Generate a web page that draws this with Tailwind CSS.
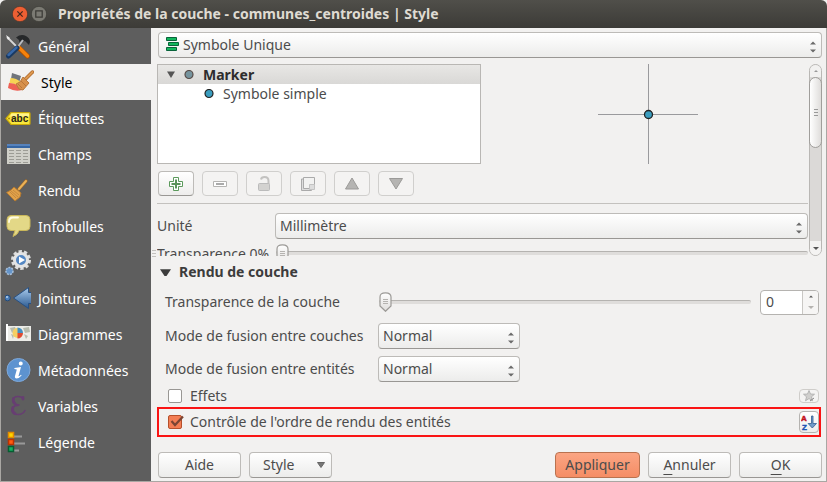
<!DOCTYPE html>
<html lang="fr">
<head>
<meta charset="utf-8">
<title>Propriétés de la couche</title>
<script src="https://cdn.jsdelivr.net/npm/@tailwindcss/browser@4"></script>
</head>
<body class="bg-[#f2f1f0] font-['Noto_Sans','Open_Sans',sans-serif] text-sm leading-5 text-[#4c4c4c]">
<svg class="absolute size-0" aria-hidden="true">
  <symbol id="updown" viewBox="0 0 6 12"><path d="M0 3.500 3 .5l3 3zM0 8.500h6l-3 3z" fill="#6a6a6a"/></symbol>
  <symbol id="knob" viewBox="0 0 13 20">
    <path d="M1 5Q1 .8 6.500.8T12 5v9l-5.500 5.300L1 14z" fill="url(#knobfill)" stroke="#9c9a97" stroke-width="1.200"/>
    <path d="M4 7.500h5M4 9.500h5M4 11.500h5" stroke="#b5b3b0" stroke-width="1"/>
  </symbol>
  <linearGradient id="knobfill" x2="0" y2="1"><stop stop-color="#fff"/><stop offset="1" stop-color="#dedcda"/></linearGradient>
</svg>
<div class="flex min-h-screen flex-col">
  <header class="flex h-7 shrink-0 items-center rounded-t-md bg-linear-to-b from-[#504f4a] to-[#3c3b37] pl-3">
    <button aria-label="Fermer" class="mr-[3px] size-4"><svg viewBox="0 0 15 15"><circle cx="7.500" cy="7.500" r="7.200" fill="#ee5f33" stroke="#33322e" stroke-width=".6"/><path d="m5 5 5 5m0-5-5 5" stroke="#45281d" stroke-width="1.200"/></svg></button>
    <button aria-label="Agrandir" class="mr-[11px] size-4"><svg viewBox="0 0 15 15"><circle cx="7.500" cy="7.500" r="7.200" fill="#7b7a73" stroke="#33322e" stroke-width=".6"/><path d="M4.500 4.500h6v6h-6z" fill="none" stroke="#3c3b37" stroke-width="1.200"/></svg></button>
    <h1 class="font-bold text-[#dfdbd2]">Propriétés de la couche - communes_centroides | Style</h1>
  </header>
  <div class="flex flex-1 border-x border-b border-[#a9a7a3]">
    <nav class="w-[150px] shrink-0 bg-[#5e5e5e] text-white">
      <a href="#" class="flex h-9 items-center gap-[7px] pt-[2px] pl-1">
        <svg class="size-[26px]" viewBox="0 0 26 26"><path d="m2 3 11 11" stroke="#d8d8d8" stroke-width="1.800"/><path d="m1 1 4 3-2 2z" fill="#eee"/><path d="M11 3.500Q16-.5 21 2q4 2 4 6l-1 3-4-4-3 1-2 3-1-5z" fill="#26282a"/><path d="m13 10 4-4 2 2-4 4z" fill="#555"/><path d="m13.500 13.500 9 8.500" stroke="#a94e00" stroke-width="5" stroke-linecap="round"/><path d="m14 13.500 8.500 8.500" stroke="#f5820c" stroke-width="3.500" stroke-linecap="round"/><path d="m18 6-6 8" stroke="#b9bcc0" stroke-width="2"/><path d="m12 14-8.500 8" stroke="#183963" stroke-width="5" stroke-linecap="round"/><path d="m11.500 13.500-8 7.500" stroke="#3868a8" stroke-width="2.500" stroke-linecap="round"/></svg>Général</a>
      <a href="#" aria-current="page" class="flex h-9 items-center gap-[7px] bg-[#f2f1f0] pt-[2px] pl-[7px] text-black">
        <svg class="size-[26px]" viewBox="0 0 26 26"><path d="m4 3 9 3-2 7-8-4z" fill="#70747b"/><path d="M2.500 8q6 0 10 4l-2 5q-4-4-9-4z" fill="#f6d254"/><path d="M1 13q6 0 9 3l4 4q-7 2-14-2z" fill="#ee6055"/><path d="m24.500 2-7 7" stroke="#a96023" stroke-width="3.500" stroke-linecap="round"/><path d="m24.500 2-7 7" stroke="#dc9850" stroke-width="2.200" stroke-linecap="round"/><path d="m15 7 6 6-6 7-4-1-3-5 4-2z" fill="#d7914c" stroke="#b9783b"/><path d="m10 14 4 4m-1-7 5 5" stroke="#a8652c" stroke-width=".6"/></svg>Style</a>
      <a href="#" class="flex h-9 items-center gap-[7px] pt-[2px] pl-1">
        <svg class="size-[26px]" viewBox="0 0 26 26"><path d="M6 6.500h18q1 0 1 1v10q0 1-1 1H6L1 12.500z" fill="#f8e63c" stroke="#cbaa07" stroke-width="1.200"/><path d="M6.500 7.500H24v3H5z" fill="#fff38b"/><circle cx="4" cy="12.500" r="1" fill="#ab8d00"/><text x="6" y="16" font-size="10" font-weight="bold" font-family="Liberation Sans" fill="#27251c">abc</text></svg>Étiquettes</a>
      <a href="#" class="flex h-9 items-center gap-[7px] pt-[2px] pl-1">
        <svg class="size-[26px]" viewBox="0 0 26 26"><path d="M2 2h23v20H2z" fill="#cfcfc8"/><path d="M2 2h23v4H2z" fill="#3465a4"/><path d="M2 3h23" stroke="#7ba1d2"/><path d="M4 8.500h5m2 0h5m2 0h5M4 11.500h5m2 0h5m2 0h5M4 14.500h5m2 0h5m2 0h5M4 17.500h5m2 0h5m2 0h5M4 20.500h5m2 0h5m2 0h5" stroke="#9c9c95"/></svg>Champs</a>
      <a href="#" class="flex h-9 items-center gap-[7px] pt-[2px] pl-1">
        <svg class="size-[26px]" viewBox="0 0 26 26"><path d="m21 3-7 8" stroke="#a96b20" stroke-width="3.200" stroke-linecap="round"/><path d="m21 3-7 8" stroke="#e9b259" stroke-width="2" stroke-linecap="round"/><path d="m9 9 7 6-1 4-5 4-8.500-8.500L6 12z" fill="#e1a24a" stroke="#b47a31"/><path d="m5 14 6 6m-3-8 6 5m-8-4 7 6" stroke="#b9803a" stroke-width=".7"/></svg>Rendu</a>
      <a href="#" class="flex h-9 items-center gap-[7px] pt-[2px] pl-1">
        <svg class="size-[26px]" viewBox="0 0 26 26"><path d="M6 1.500h15q4 0 4 4v7q0 4-4 4h-7q-1 4-6 6l2-6H6q-4 0-4-4v-7q0-4 4-4z" fill="#e3d887" stroke="#c9b75a"/><path d="M4 8q0-4.500 4-4.500h5" fill="none" stroke="#fffce3" stroke-width="1.800" stroke-linecap="round"/></svg>Infobulles</a>
      <a href="#" class="flex h-9 items-center gap-[7px] pt-[2px] pl-1">
        <svg class="size-[26px]" viewBox="0 0 26 26"><circle cx="16" cy="10" r="8.500" fill="none" stroke="#dedede" stroke-width="3" stroke-dasharray="3.300 2.040"/><circle cx="16" cy="10" r="6.500" fill="#5487c3" stroke="#e4e4e4" stroke-width="3"/><path d="m14 6.500 6 3.500-6 3.500z" fill="#fff"/><circle cx="4.500" cy="21" r="3.500" fill="#6595ca" stroke="#a9bfd8" stroke-width="1.600" stroke-dasharray="2 1"/></svg>Actions</a>
      <a href="#" class="flex h-9 items-center gap-[7px] pt-[2px] pl-1">
        <svg class="size-[26px]" viewBox="0 0 26 26"><defs><linearGradient id="cone" x2="0" y2="1"><stop stop-color="#a9cbed"/><stop offset="1" stop-color="#29588f"/></linearGradient></defs><path d="m8.500 12 15-10.500v5h3v11h-3v5z" fill="url(#cone)" stroke="#275083"/><circle cx="2.500" cy="12" r="2.800" fill="#4c7fba" stroke="#224a7a"/><circle cx="2" cy="11" r="1" fill="#b9d5ef"/></svg>Jointures</a>
      <a href="#" class="flex h-9 items-center gap-[7px] pt-[2px] pl-1">
        <svg class="size-[26px]" viewBox="0 0 26 26"><path d="M2 4h24v15H2z" fill="#ecece8"/><path d="M2 2v17" stroke="#fff" stroke-width="2"/><path d="m5 6 5-1 1 3-4 3zm13 0 6-1 1 5-5 1zm-12 6 3 1-1 4zm13 0 4 2-2 3z" fill="#b7bcae"/><circle cx="12.500" cy="11" r="5" fill="#f5cf64"/><path d="M12.500 5.500a5.500 5.500 0 0 1 5.500 5.500h-5.500z" fill="#448fc2"/><path d="M12.500 11H18a5.500 5.500 0 0 1-5.500 5.500z" fill="#df4b32"/></svg>Diagrammes</a>
      <a href="#" class="flex h-9 items-center gap-[7px] pt-[2px] pl-1">
        <svg class="size-[26px]" viewBox="0 0 26 26"><circle cx="13.500" cy="12" r="11.500" fill="#5d93d0" stroke="#7fa9da"/><path d="M15.800 3.500a2 2 0 1 1-.1 4 2 2 0 0 1 .1-4zM9.500 10q3.500-.3 6.500-1l-2.500 9q0 1 2.500-1.200l.6.8q-2.600 3-5 3-2.200-.2-1.600-2.600l1.800-6.500-2.500-.5z" fill="#fff"/></svg>Métadonnées</a>
      <a href="#" class="flex h-9 items-center gap-[7px] pt-[2px] pl-1">
        <svg class="size-[26px]" viewBox="0 0 26 26" fill="none" stroke="#673e72" stroke-linecap="round"><path d="M18 4.500Q16.500 2.500 13 2.500q-5 0-5 4t6 4.500M13 11.500q-6 0-6 4.500t6 4.500q5 0 7-4" stroke-width="1.600"/><path d="M8.500 4.500q-1 3 1.500 5M8 13.500q-1.500 4 2 6M18 3.500v1.500" stroke-width="2.800"/></svg>Variables</a>
      <a href="#" class="flex h-9 items-center gap-[7px] pt-[2px] pl-1">
        <svg class="size-[26px]" viewBox="0 0 26 26"><path d="M9 6.500h8m-8 7h11m-11 7h5" stroke="#999" stroke-width="2"/><path d="M3.500 2.500h5v5h-5z" fill="#ffd500" stroke="#e38b00" stroke-width="1.500"/><path d="M3.500 9.500h5v5h-5z" fill="#ff5b10" stroke="#bd3200" stroke-width="1.500"/><path d="M3.500 16.500h5v5h-5z" fill="#16b160" stroke="#075c32" stroke-width="1.500"/></svg>Légende</a>
    </nav>
    <main class="flex min-w-0 flex-1 flex-col pt-1 pr-1 pb-[3px] pl-[6px]">
      <div class="relative ml-px">
        <select aria-label="Type de symbole" class="block h-[26px] w-full appearance-none rounded-[4px] border border-[#bdbbb8] border-b-[#999794] bg-linear-to-b from-white to-[#ececeb] pl-6"><option>Symbole Unique</option></select>
        <svg class="pointer-events-none absolute top-[5px] left-[7px] h-[15px] w-[14px]" viewBox="0 0 14 15" fill="#12b65c" stroke="#08633a"><path d="M1.500.5h10v3h-10zM3.500 5.500h10v3h-10zM1.500 10.500h10v3h-10z"/></svg>
        <svg class="pointer-events-none absolute top-[9px] right-[6px] h-3 w-[6px]"><use href="#updown"/></svg>
      </div>
      <section class="mt-[6px] flex h-48 overflow-hidden">
        <div class="min-w-0 flex-1">
          <div class="flex">
            <ul role="tree" class="h-[100px] w-[324px] border border-[#b9b7b4] bg-white">
              <li role="treeitem" class="flex h-[19px] items-center bg-linear-to-b from-[#e8e7e5] to-[#d9d8d6] pl-2 font-bold text-[#2d2d2d]">
                <svg class="mr-2 size-[10px]" viewBox="0 0 10 10"><path d="M1 1.500h8L5 8z" fill="#555"/></svg>
                <svg class="mr-[9px] size-[10px]" viewBox="0 0 10 10"><circle cx="5" cy="4.500" r="4" fill="#76949e" stroke="#584c48" stroke-width="1.200"/></svg>Marker</li>
              <li role="treeitem" class="flex h-[19px] items-center gap-[9px] pl-[46px]">
                <svg class="size-[10px]" viewBox="0 0 10 10"><circle cx="5" cy="4.500" r="4" fill="#3a9dbf" stroke="#222" stroke-width="1.200"/></svg>Symbole simple</li>
            </ul>
            <div class="flex flex-1 justify-center pl-[6px]">
              <svg class="size-[100px]" viewBox="0 0 100 100"><path d="M50.500 0v100M0 50.500h100" stroke="#9a9a9d"/><circle cx="50.500" cy="50.500" r="4" fill="#3a9dbf" stroke="#222" stroke-width="1.300"/></svg>
            </div>
          </div>
          <div class="mt-[7px] ml-px flex gap-2">
            <button aria-label="Ajouter" class="flex h-[25px] w-9 items-center justify-center rounded-[4px] border border-[#bdbbb8] border-b-[#999794] bg-linear-to-b from-white to-[#eeedec]"><svg class="size-4" viewBox="0 0 16 16"><path d="M5.500 1.500h5v4h4v5h-4v4h-5v-4h-4v-5h4z" fill="#fff" stroke="#5c9a5c"/><path d="M8 3.500v9M3.500 8h9" stroke="#5a925a" stroke-width="2"/></svg></button>
            <button disabled aria-label="Supprimer" class="flex h-[25px] w-9 items-center justify-center rounded-[4px] border border-[#d0cfcd] bg-[#f4f3f2]"><svg class="size-4" viewBox="0 0 16 16"><path d="M1.500 5.500h13v5h-13z" fill="#fff" stroke="#b5b4b2"/><path d="M4 8h8" stroke="#aaa" stroke-width="2"/></svg></button>
            <button disabled aria-label="Verrouiller" class="flex h-[25px] w-9 items-center justify-center rounded-[4px] border border-[#d0cfcd] bg-[#f4f3f2]"><svg class="size-4" viewBox="0 0 16 16"><path d="M5 3.500Q5.500 1 8.500 1q4 0 4 4v3" fill="none" stroke="#c3c2c0" stroke-width="2"/><rect x="2.500" y="7.500" width="11" height="7" rx="1" fill="#d3d2d0" stroke="#bbb"/></svg></button>
            <button disabled aria-label="Dupliquer" class="flex h-[25px] w-9 items-center justify-center rounded-[4px] border border-[#d0cfcd] bg-[#f4f3f2]"><svg class="size-4" viewBox="0 0 16 16"><path d="M3.500 3h-2v11.500h10V14" fill="#ddd" stroke="#aaa"/><path d="M3.500 1.500h11v11h-11z" fill="#f2f2f1" stroke="#aaa"/><path d="M9.500 8.500h5v5h-5z" fill="#ddd" stroke="#c3c3c3"/></svg></button>
            <button disabled aria-label="Monter" class="flex h-[25px] w-9 items-center justify-center rounded-[4px] border border-[#d0cfcd] bg-[#f4f3f2]"><svg class="size-4" viewBox="0 0 16 16"><path d="m8 2 6.500 11h-13z" fill="#b5b4b2" stroke="#9b9a98"/></svg></button>
            <button disabled aria-label="Descendre" class="flex h-[25px] w-9 items-center justify-center rounded-[4px] border border-[#d0cfcd] bg-[#f4f3f2]"><svg class="size-4" viewBox="0 0 16 16"><path d="M1.500 2.500h13L8 13z" fill="#b5b4b2" stroke="#9b9a98"/></svg></button>
          </div>
          <hr class="mt-[7px] border-[#c3c1be]">
          <div class="mt-[9px] flex items-center">
            <label for="unit" class="w-[118px]">Unité</label>
            <div class="relative flex-1">
              <select id="unit" class="block h-[26px] w-full appearance-none rounded-[4px] border border-[#bdbbb8] border-b-[#999794] bg-linear-to-b from-white to-[#ececeb] pl-1"><option>Millimètre</option></select>
              <svg class="pointer-events-none absolute top-[9px] right-[6px] h-3 w-[6px]"><use href="#updown"/></svg>
            </div>
          </div>
          <div class="mt-[5px] flex items-start">
            <label for="alpha" class="w-[119px] whitespace-nowrap">Transparence 0%</label>
            <div class="relative h-5 flex-1">
              <input id="alpha" type="range" value="0" class="mt-[7px] block h-1 w-full appearance-none rounded-sm border-t border-[#b5b3b0] bg-[#dfdddb] [&::-webkit-slider-thumb]:opacity-0">
              <svg class="pointer-events-none absolute top-0 left-0 h-5 w-[13px]"><use href="#knob"/></svg>
            </div>
          </div>
        </div>
        <div role="scrollbar" aria-label="Défilement" aria-controls="unit" aria-valuenow="0" class="ml-px flex w-[13px] flex-col items-center rounded-full border border-[#b9b7b4] bg-[#dbd9d7]">
          <span class="flex h-3 w-full shrink-0 items-center justify-center rounded-t-full bg-[#f2f1f0]"><svg class="h-[2px] w-1" viewBox="0 0 4 2"><path d="m0 2 2-2 2 2z" fill="#999"/></svg></span>
          <span class="flex h-[71px] w-[13px] shrink-0 flex-col items-center justify-center gap-[2px] rounded-full border border-[#a09e9b] bg-linear-to-r from-white to-[#dfdddb]"><i class="h-px w-1 bg-[#999]"></i><i class="h-px w-1 bg-[#999]"></i><i class="h-px w-1 bg-[#999]"></i></span>
          <span class="mt-auto flex h-[14px] w-full items-center justify-center rounded-b-full bg-[#f4f3f2]"><svg class="h-[3px] w-[6px]" viewBox="0 0 6 3"><path d="M0 0h6L3 3z" fill="#555"/></svg></span>
        </div>
      </section>
      <section class="relative">
        <div class="absolute -top-[6px] -left-[5px] flex flex-col gap-[2px]"><i class="h-px w-1 bg-[#c3c1be]"></i><i class="h-px w-1 bg-[#c3c1be]"></i><i class="h-px w-1 bg-[#c3c1be]"></i></div>
        <h2><button aria-expanded="true" class="flex h-8 items-center gap-2 pl-[3px] font-bold text-[#3c3c3c]"><svg class="h-[7px] w-[11px]" viewBox="0 0 11 7"><path d="M0 .3h11L6.500 7h-2z" fill="#3c3c3c"/></svg>Rendu de couche</button></h2>
        <div class="flex h-7 items-center pl-2">
          <label for="layer-alpha" class="w-[214px]">Transparence de la couche</label>
          <div class="relative flex-1">
            <input id="layer-alpha" type="range" value="0" class="block h-1 w-full appearance-none rounded-sm border-t border-[#b5b3b0] bg-[#dfdddb] [&::-webkit-slider-thumb]:opacity-0">
            <svg class="pointer-events-none absolute -top-2 left-0 h-5 w-[13px]"><use href="#knob"/></svg>
          </div>
          <div class="mr-[3px] ml-[9px] flex h-[25px] w-[59px] overflow-hidden rounded-[4px] border border-[#b5b3b0] bg-white">
            <input type="text" inputmode="numeric" value="0" aria-label="Valeur de transparence" class="w-[42px] border-r border-[#c9c7c4] px-[5px] outline-none">
            <div class="flex flex-1 flex-col bg-[#f6f5f4]">
              <button aria-label="Augmenter" class="flex flex-1 items-center justify-center"><svg class="h-[3px] w-[6px]" viewBox="0 0 6 3"><path d="m1 2.500 2-2 2 2z" fill="#555"/></svg></button>
              <button aria-label="Diminuer" class="flex flex-1 items-center justify-center"><svg class="h-[3px] w-[6px]" viewBox="0 0 6 3"><path d="M0 0h6L3 3z" fill="#b5b3b0"/></svg></button>
            </div>
          </div>
        </div>
        <div class="mt-[7px] flex items-center pl-2">
          <label for="blend-layer" class="w-[213px] whitespace-nowrap">Mode de fusion entre couches</label>
          <div class="relative w-[142px]">
            <select id="blend-layer" class="block h-[26px] w-full appearance-none rounded-[4px] border border-[#bdbbb8] border-b-[#999794] bg-linear-to-b from-white to-[#ececeb] pl-1"><option>Normal</option></select>
            <svg class="pointer-events-none absolute top-[9px] right-[6px] h-3 w-[6px]"><use href="#updown"/></svg>
          </div>
        </div>
        <div class="mt-[7px] flex items-center pl-2">
          <label for="blend-feature" class="w-[213px] whitespace-nowrap">Mode de fusion entre entités</label>
          <div class="relative w-[142px]">
            <select id="blend-feature" class="block h-[26px] w-full appearance-none rounded-[4px] border border-[#bdbbb8] border-b-[#999794] bg-linear-to-b from-white to-[#ececeb] pl-1"><option>Normal</option></select>
            <svg class="pointer-events-none absolute top-[9px] right-[6px] h-3 w-[6px]"><use href="#updown"/></svg>
          </div>
        </div>
        <div class="flex h-[25px] items-center pt-[2px] pr-[3px] pl-[11px]">
          <input id="effects" type="checkbox" class="mr-2 size-[14px] appearance-none rounded-[2px] border border-[#999794] bg-white">
          <label for="effects">Effets</label>
          <button disabled aria-label="Personnaliser les effets" class="ml-auto flex h-[14px] w-5 items-center justify-center rounded-[4px] border border-[#cfcdca] bg-[#f4f3f2]"><svg class="size-3" viewBox="0 0 12 12"><path d="m6 .5 1.500 3.500 4 .2-3 2.600 1 4L6 8.600l-3.500 2.200 1-4-3-2.600 4-.2z" fill="#d0cfcd" stroke="#aaa" stroke-width=".8"/><path d="m7 11 4-3" stroke="#888"/></svg></button>
        </div>
        <div class="mr-px flex h-[30px] items-center border-2 border-[#fa1414] pl-[9px]">
          <span class="relative mr-2 size-[14px]">
            <input id="order" type="checkbox" checked class="block size-[14px] appearance-none rounded-[2px] border border-[#b5502c] bg-[#f37d53]">
            <svg class="pointer-events-none absolute top-0 left-[2px] h-3 w-[14px]" viewBox="0 0 14 12"><path d="m1.500 6 3.500 4 8-8.500" fill="none" stroke="#7a4433" stroke-width="2.200"/></svg>
          </span>
          <label for="order">Contrôle de l'ordre de rendu des entités</label>
          <button aria-label="Définir l'ordre de rendu" class="ml-auto flex h-[22px] w-5 items-center justify-center rounded-[4px] border border-[#b5b3b0] bg-linear-to-b from-white to-[#eeedec]"><svg class="h-[18px] w-4" viewBox="0 0 16 18"><text x="0" y="8" font-family="Liberation Sans" font-size="8" font-weight="bold" fill="#c3121c" stroke="#c3121c" stroke-width=".5">A</text><text x="1" y="17" font-family="Liberation Sans" font-size="8" font-weight="bold" fill="#1b53b5" stroke="#1b53b5" stroke-width=".5">Z</text><path d="M10.500 3h1.500v7.500h3.500l-4.200 4.500-4.200-4.500h3.400z" fill="#709cca" stroke="#345e91" stroke-width=".8"/></svg></button>
        </div>
      </section>
      <footer class="mt-auto ml-px flex gap-2">
        <button class="h-[26px] w-[83px] rounded-[4px] border border-[#bdbbb8] border-b-[#999794] bg-linear-to-b from-white to-[#ececeb]">Aide</button>
        <button class="flex h-[26px] w-[83px] items-center justify-between rounded-[4px] border border-[#bdbbb8] border-b-[#999794] bg-linear-to-b from-white to-[#ececeb] pr-[6px] pl-[13px]">Style<svg class="h-[6px] w-2" viewBox="0 0 8 6"><path d="M.5.5h7L4 5.500z" fill="#777" stroke="#666"/></svg></button>
        <button class="ml-auto h-[26px] w-[85px] rounded-[4px] border border-[#b9724f] bg-linear-to-b from-[#fba583] to-[#f58d65]">Appliquer</button>
        <button class="h-[26px] w-[83px] rounded-[4px] border border-[#bdbbb8] border-b-[#999794] bg-linear-to-b from-white to-[#ececeb]"><span class="underline underline-offset-4">A</span>nnuler</button>
        <button class="h-[26px] w-[83px] rounded-[4px] border border-[#bdbbb8] border-b-[#999794] bg-linear-to-b from-white to-[#ececeb]"><span class="underline underline-offset-4">O</span>K</button>
      </footer>
    </main>
  </div>
</div>
</body>
</html>
